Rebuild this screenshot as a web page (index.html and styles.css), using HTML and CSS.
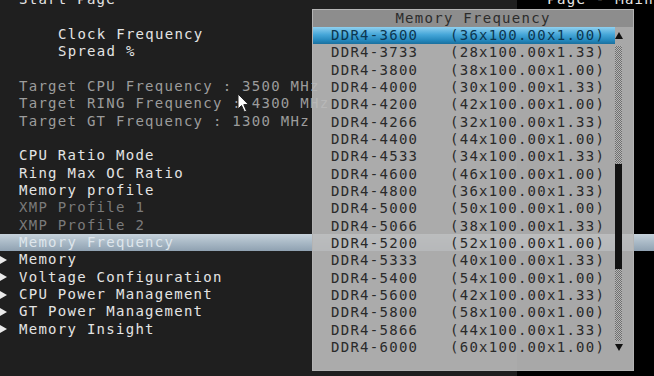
FILE: index.html
```html
<!DOCTYPE html>
<html lang="en">
<head>
    <meta charset="UTF-8">
    <meta name="viewport" content="width=device-width, initial-scale=1.0">
    <title>Memory Frequency</title>
    <link rel="stylesheet" href="styles.css">
</head>
<body>

<div class="screen">
    <ul class="menu">
        <li class="row top-row"><span class="label">Start Page</span><span class="page-title">Page - Main</span></li>
        <li class="row"></li>
        <li class="row indent">Clock Frequency</li>
        <li class="row indent">Spread %</li>
        <li class="row"></li>
        <li class="row dim">Target CPU Frequency : 3500 MHz</li>
        <li class="row dim">Target RING Frequency : 4300 MHz</li>
        <li class="row dim">Target GT Frequency : 1300 MHz</li>
        <li class="row"></li>
        <li class="row">CPU Ratio Mode</li>
        <li class="row">Ring Max OC Ratio</li>
        <li class="row">Memory profile</li>
        <li class="row dimmer">XMP Profile 1</li>
        <li class="row dimmer">XMP Profile 2</li>
        <li class="row active">Memory Frequency</li>
        <li class="row sub"><span class="marker"></span>Memory</li>
        <li class="row sub"><span class="marker"></span>Voltage Configuration</li>
        <li class="row sub"><span class="marker"></span>CPU Power Management</li>
        <li class="row sub"><span class="marker"></span>GT Power Management</li>
        <li class="row sub"><span class="marker"></span>Memory Insight</li>
    </ul>

    <div class="popup">
        <div class="popup-title">Memory Frequency</div>
        <ul class="options">
            <li class="option selected"><span class="name">DDR4-3600</span><span>(36x100.00x1.00)</span></li>
            <li class="option"><span class="name">DDR4-3733</span><span>(28x100.00x1.33)</span></li>
            <li class="option"><span class="name">DDR4-3800</span><span>(38x100.00x1.00)</span></li>
            <li class="option"><span class="name">DDR4-4000</span><span>(30x100.00x1.33)</span></li>
            <li class="option"><span class="name">DDR4-4200</span><span>(42x100.00x1.00)</span></li>
            <li class="option"><span class="name">DDR4-4266</span><span>(32x100.00x1.33)</span></li>
            <li class="option"><span class="name">DDR4-4400</span><span>(44x100.00x1.00)</span></li>
            <li class="option"><span class="name">DDR4-4533</span><span>(34x100.00x1.33)</span></li>
            <li class="option"><span class="name">DDR4-4600</span><span>(46x100.00x1.00)</span></li>
            <li class="option"><span class="name">DDR4-4800</span><span>(36x100.00x1.33)</span></li>
            <li class="option"><span class="name">DDR4-5000</span><span>(50x100.00x1.00)</span></li>
            <li class="option"><span class="name">DDR4-5066</span><span>(38x100.00x1.33)</span></li>
            <li class="option"><span class="name">DDR4-5200</span><span>(52x100.00x1.00)</span></li>
            <li class="option"><span class="name">DDR4-5333</span><span>(40x100.00x1.33)</span></li>
            <li class="option"><span class="name">DDR4-5400</span><span>(54x100.00x1.00)</span></li>
            <li class="option"><span class="name">DDR4-5600</span><span>(42x100.00x1.33)</span></li>
            <li class="option"><span class="name">DDR4-5800</span><span>(58x100.00x1.00)</span></li>
            <li class="option"><span class="name">DDR4-5866</span><span>(44x100.00x1.33)</span></li>
            <li class="option"><span class="name">DDR4-6000</span><span>(60x100.00x1.00)</span></li>
        </ul>
        <div class="scrollbar">
            <div class="arrow-up"></div>
            <div class="track">
                <div class="thumb"></div>
            </div>
            <div class="arrow-down"></div>
        </div>
    </div>

    <!-- mouse pointer -->
    <svg class="cursor" width="14" height="21" viewBox="0 0 14 21">
        <path d="M1 1 L1 16 L4.5 12.5 L7.5 19 L9.5 18 L6.8 11.6 L11.5 11.6 Z" fill="#fff" stroke="#222" stroke-width="1"/>
    </svg>
</div>

</body>
</html>
```

FILE: styles.css
```css
/* BIOS look */
body {
    margin: 0;
    padding: 0;
    background-color: #000;
    font-family: "DejaVu Sans Mono", "Liberation Mono", monospace;
    font-size: 14px;
    letter-spacing: 1.27px;
    overflow: hidden;
}
.screen {
    position: relative;
    width: 654px;
    height: 376px;
    overflow: hidden;
    background: linear-gradient(to right, #1f1f1f 517px, #000 517px);
}
.menu {
    list-style: none;
    margin: -8.67px 0 0 0;
    padding: 0;
}
.row {
    display: flex;
    align-items: center;
    height: 17.333px;
    line-height: 17.333px;
    padding-left: 19px;
    color: #e4e4e4;
    white-space: nowrap;
}
.row.indent {
    padding-left: 58px;
}
.row.dim {
    color: #9c9c9c;
}
.row.dimmer {
    color: #7a7a7a;
}
.row.active {
    color: #dfe6ec;
    background: linear-gradient(to bottom, #c6d2db 0%, #a9b9c6 50%, #8fa1b1 100%);
}
.row.sub {
    padding-left: 0;
}
.marker {
    width: 19px;
    height: 8px;
    flex-shrink: 0;
}
.marker::before {
    content: "";
    display: block;
    width: 0;
    height: 0;
    border-top: 4px solid transparent;
    border-bottom: 4px solid transparent;
    border-left: 7px solid #eaeaea;
}
.top-row .label {
    width: 536px;
}
.page-title {
    color: #e8e8e8;
}

/* Popup */
.popup {
    position: absolute;
    left: 312px;
    top: 8.67px;
    width: 320px;
    height: 360px;
    border: 1px solid #b4b4b4;
    background-color: rgba(186, 186, 186, 0.9);
    color: #2a2a2a;
}
.popup-title {
    height: 17.333px;
    line-height: 17.333px;
    text-align: center;
    background-color: #8d8d8d;
    color: #2c2c2c;
}
.options {
    list-style: none;
    margin: 0;
    padding: 0;
    width: 302px;
}
.option {
    display: flex;
    height: 17.333px;
    line-height: 17.333px;
    padding-left: 18px;
    white-space: nowrap;
}
.option .name {
    width: 119px;
}
.option.selected {
    color: #0b3650;
    background: linear-gradient(to bottom, #8fd0ef 0%, #45a6d8 45%, #2386bb 80%, #1a6f9e 100%);
}
.scrollbar {
    position: absolute;
    left: 301px;
    top: 22px;
    width: 9px;
    display: flex;
    flex-direction: column;
    align-items: center;
}
.arrow-up {
    width: 0;
    height: 0;
    border-left: 4px solid transparent;
    border-right: 4px solid transparent;
    border-bottom: 7px solid #111;
}
.arrow-down {
    width: 0;
    height: 0;
    border-left: 4px solid transparent;
    border-right: 4px solid transparent;
    border-top: 7px solid #111;
}
.track {
    width: 7px;
    height: 295px;
    margin: 7px 0 3px 0;
    background-image: conic-gradient(#6e6e6e 25%, #b6b6b6 0 50%, #6e6e6e 0 75%, #b6b6b6 0);
    background-size: 2px 2px;
    padding-top: 118px;
    box-sizing: border-box;
}
.thumb {
    width: 7px;
    height: 105px;
    background-color: #121212;
}

.cursor {
    position: absolute;
    left: 237px;
    top: 93px;
}
```
